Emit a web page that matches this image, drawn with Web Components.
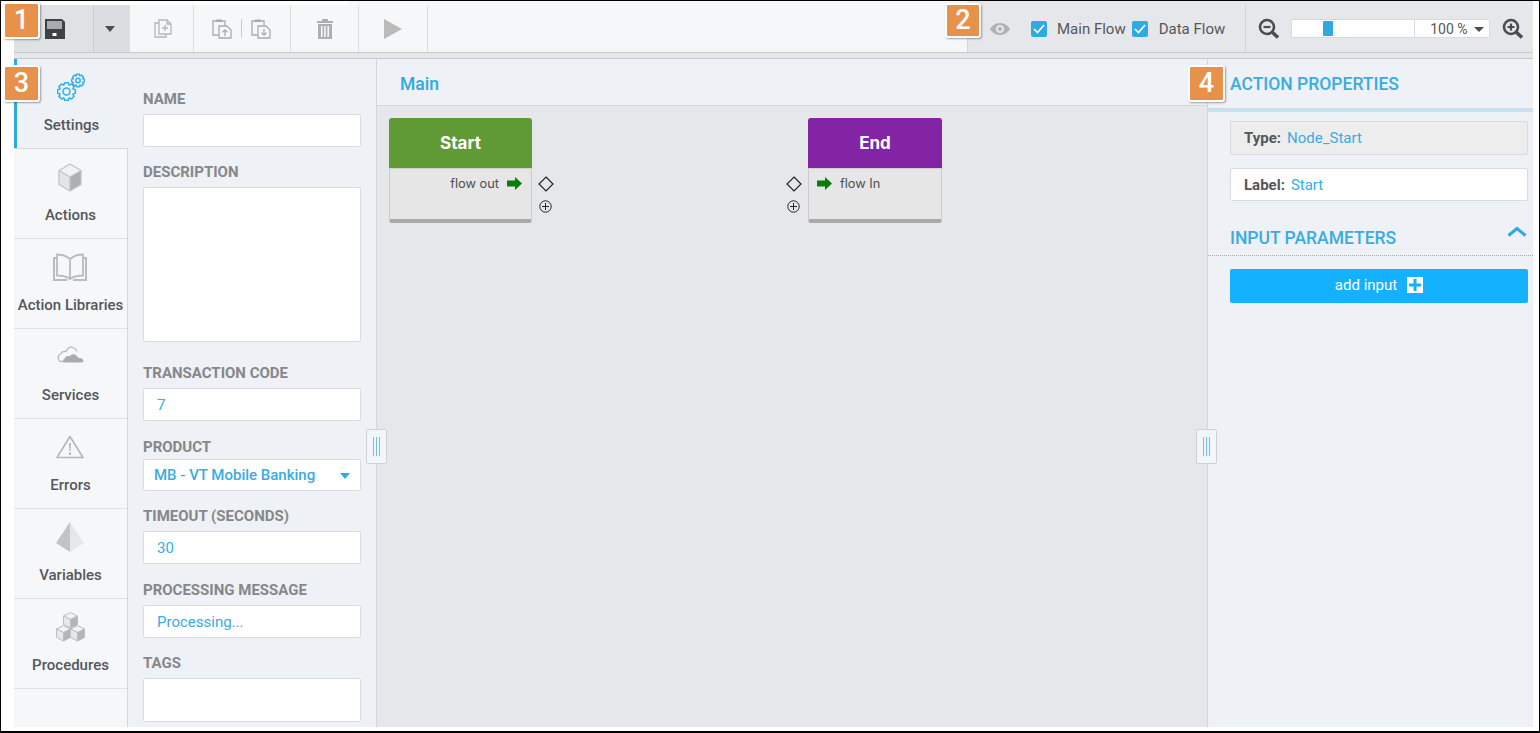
<!DOCTYPE html>
<html lang="en">
<head>
<meta charset="UTF-8">
<title>Flow Designer</title>
<style>
  html, body { margin: 0; padding: 0; background: #fff; }
  body { font-family: Roboto, "Liberation Sans", sans-serif; }
</style>
</head>
<body>

<flow-designer>
  <tool-bar slot="top"></tool-bar>
  <side-tabs slot="tabs">
    <side-tab label="Settings" active icon="gears"></side-tab>
    <side-tab label="Actions" icon="cube"></side-tab>
    <side-tab label="Action Libraries" icon="book"></side-tab>
    <side-tab label="Services" icon="cloud"></side-tab>
    <side-tab label="Errors" icon="warn"></side-tab>
    <side-tab label="Variables" icon="pyramid"></side-tab>
    <side-tab label="Procedures" icon="cubes"></side-tab>
  </side-tabs>
  <settings-form slot="form">
    <form-field label="NAME" h="33" style="margin-top:32px"></form-field>
    <form-field label="DESCRIPTION" h="155" style="margin-top:17px"></form-field>
    <form-field label="TRANSACTION CODE" value="7" h="33" style="margin-top:23px"></form-field>
    <form-field label="PRODUCT" value="MB - VT Mobile Banking" select h="32" gap="4" style="margin-top:18px"></form-field>
    <form-field label="TIMEOUT (SECONDS)" value="30" h="33" style="margin-top:17px"></form-field>
    <form-field label="PROCESSING MESSAGE" value="Processing..." h="33" style="margin-top:18px"></form-field>
    <form-field label="TAGS" h="44" style="margin-top:17px"></form-field>
  </settings-form>
  <flow-canvas slot="canvas">
    <flow-node kind="start" style="left:12px;top:12px">Start</flow-node>
    <flow-node kind="end" style="left:431px;top:12px">End</flow-node>
  </flow-canvas>
  <props-panel slot="props"></props-panel>
</flow-designer>

<script>
// all the icons in one place, used by toolbar and tabs
function gear(cx, cy, r, teeth) {
  let d = '';
  const step = Math.PI * 2 / teeth;
  for (let i = 0; i < teeth; i++) {
    const a = i * step;
    const pts = [[-.5, r * .78], [-.3, r], [.3, r], [.5, r * .78]];
    pts.forEach((p, j) => {
      const t = a + p[0] * step * .9;
      d += (i === 0 && j === 0 ? 'M' : 'L') + (cx + Math.cos(t) * p[1]).toFixed(2) + ' ' + (cy + Math.sin(t) * p[1]).toFixed(2) + ' ';
    });
  }
  return d + 'Z';
}

const CUBE = `<path fill="#f1f2f3" d="M7.500 .500 14.500 4l-7 3.500L.500 4z"/><path fill="#e6e7e8" d="M.500 4l7 3.500V16l-7-3.500z"/><path fill="#b3b5b7" d="M14.500 4l-7 3.500V16l7-3.500z"/>`;

const ICONS = {
  floppy: `<svg width="20" height="20" viewBox="0 0 20 20"><path fill="#3f4245" d="M0 0h17l3 3v17H0z"/><path fill="#a9acae" d="M2 2h15v8H2z"/><path fill="#fff" d="M7.500 14h4v3h-4z"/></svg>`,
  newdoc: `<svg width="18" height="19" viewBox="0 0 18 19" fill="none" stroke="#b4b6b8" stroke-width="1.300"><path d="M5 1h8l4 4v10H5z"/><path d="M13 1v4h4"/><path d="M5 4H1v14h11v-3"/><path d="M11 6v6M8 9h6"/></svg>`,
  pasteUp: `<svg width="20" height="21" viewBox="0 0 20 21" fill="none" stroke="#a9abad" stroke-width="1.300"><path d="M7 17H1V3h12v5"/><path fill="#a9abad" stroke="none" d="M4 1.500h6V4H4z"/><path d="M7 8h8l4 4v8H7z"/><path d="M13 18v-6M10.500 14.200 13 11.800l2.500 2.400"/></svg>`,
  pasteDown: `<svg width="20" height="21" viewBox="0 0 20 21" fill="none" stroke="#a9abad" stroke-width="1.300"><path d="M7 17H1V3h12v5"/><path fill="#a9abad" stroke="none" d="M4 1.500h6V4H4z"/><path d="M7 8h8l4 4v8H7z"/><path d="M13 11v6M10.500 14.800 13 17.200l2.500-2.400"/></svg>`,
  trash: `<svg width="16" height="20" viewBox="0 0 16 20"><path fill="#adafb1" d="M5 0h6v2h5v2H0V2h5zM1 5h14v15H1zM4 7v11h1.600V7zM7.200 7v11h1.600V7zM10.400 7v11H12V7z" fill-rule="evenodd"/></svg>`,
  play: `<svg width="18" height="20" viewBox="0 0 18 20"><path fill="#bababa" d="M0 0l18 10L0 20z"/></svg>`,
  eye: `<svg width="20" height="12" viewBox="0 0 20 12"><path fill="#b0b2b4" fill-rule="evenodd" d="M10 0c5 0 8.600 3.500 10 6-1.400 2.500-5 6-10 6S1.400 8.500 0 6c1.400-2.500 5-6 10-6zm0 2a4 4 0 1 0 0 8 4 4 0 0 0 0-8zm0 2a2 2 0 1 1 0 4 2 2 0 0 1 0-4z"/></svg>`,
  zoomOut: `<svg width="22" height="21" viewBox="0 0 22 21" fill="none" stroke="#4b4e50"><circle cx="9" cy="9" r="7" stroke-width="2.600"/><path d="M5.500 9h7" stroke-width="2.200"/><path d="M14 14l6 5.500" stroke-width="3.600"/></svg>`,
  zoomIn: `<svg width="22" height="21" viewBox="0 0 22 21" fill="none" stroke="#4b4e50"><circle cx="9" cy="9" r="7" stroke-width="2.600"/><path d="M5.500 9h7M9 5.500v7" stroke-width="2.200"/><path d="M14 14l6 5.500" stroke-width="3.600"/></svg>`,
  gears: `<svg width="28" height="29" viewBox="0 0 28 29" fill="none" stroke="#35afe4" stroke-width="1.500" stroke-linejoin="round"><path d="${gear(9.500, 18.500, 9, 8)}"/><circle cx="9.500" cy="18.500" r="3.500"/><path d="${gear(21, 7.500, 6.500, 8)}"/><circle cx="21" cy="7.500" r="2.200"/></svg>`,
  cube: `<svg width="24" height="29" viewBox="0 0 24 29"><path fill="#acaeb0" d="M12 14 23 7.500v14L12 28z"/><path fill="#e3e4e6" d="M12 14 1 7.500v14L12 28z"/><path fill="#f1f2f3" d="M12 1 23 7.500 12 14 1 7.500z"/><path fill="none" stroke="#c2c4c6" stroke-width="1.300" stroke-linejoin="round" d="M12 1 23 7.500v14L12 28 1 21.500v-14zM1 7.500 12 14l11-6.500M12 14v14"/></svg>`,
  book: `<svg width="34" height="28" viewBox="0 0 34 28"><path fill="#f6f7f9" stroke="#b9bbbd" stroke-width="1.800" d="M17 6C13 2.500 8 1.500 4 1.500v21c4.500 0 9.500 1 13 3.500 3.500-2.500 8.500-3.500 13-3.500v-21C26 1.500 21 2.500 17 6zM17 6v20"/><path fill="none" stroke="#b9bbbd" stroke-width="2" d="M3.500 5H1v22h13M30.500 5H33v22H20"/></svg>`,
  cloud: `<svg width="28" height="22" viewBox="0 0 28 22"><path fill="none" stroke="#b5b7b9" stroke-width="1.300" d="M8 15.500H5A4 4 0 0 1 4.500 8a5 5 0 0 1 5.500-2.500C11.500 2 14.500.700 17 1.500c2.500.800 3.500 2.500 4 4"/><path fill="#a9abad" d="M9 16.500c-2 0-2.500-3-.500-3.500.500-2.500 3-3.500 5-2.500 1.500-2.500 5-3 7-1 1.500 1.500 1.500 2 1.700 2.300 2.800-.300 5.300 1.700 5.300 3 0 1-1 1.700-2 1.700z"/></svg>`,
  warn: `<svg width="28" height="24" viewBox="0 0 28 24"><path fill="none" stroke="#b5b7b9" stroke-width="1.600" stroke-linejoin="round" d="M14 1.500 27 22.500H1z"/><path fill="#b5b7b9" d="M13 8h2l-.400 8h-1.200zM13 17.500h2V20h-2z"/></svg>`,
  pyramid: `<svg width="28" height="30" viewBox="0 0 28 30"><path fill="#c2c3c5" d="M14 0 0 21l14 9z"/><path fill="#e6e7e9" d="M14 0 28 21l-14 9z"/></svg>`,
  cubes: `<svg width="29" height="30" viewBox="0 0 29 30" stroke="#bcbec0" stroke-width="1" stroke-linejoin="round"><g transform="translate(7 0)">${CUBE}</g><g transform="translate(0 13)">${CUBE}</g><g transform="translate(14 13)">${CUBE}</g></svg>`,
  arrow: `<svg width="15" height="13" viewBox="0 0 15 13"><path fill="#0a7d0a" d="M0 3.500h8V0l7 6.500-7 6.500V9.500H0z"/></svg>`,
  diamond: `<svg width="16" height="16" viewBox="0 0 16 16"><path fill="none" stroke="#222" stroke-width="1.200" d="M8 1l7 7-7 7-7-7z"/></svg>`,
  plus: `<svg width="13" height="13" viewBox="0 0 13 13" fill="none" stroke="#222"><circle cx="6.500" cy="6.500" r="5.700"/><path d="M6.500 3v7M3 6.500h7"/></svg>`
};

class FlowDesigner extends HTMLElement {
  constructor() {
    super();
    this.attachShadow({ mode: 'open' });
    this.shadowRoot.innerHTML = `
      <style>
        :host { display: block; position: relative; width: 1540px; height: 733px; box-sizing: border-box;
          border: 1px solid #000; border-bottom-width: 2px; padding: 0 6px 4px 13px; background: #fff; overflow: hidden;
          font-family: Roboto, "Liberation Sans", sans-serif; }
        .frame { display: flex; flex-direction: column; height: 100%; }
        .gap { height: 5px; flex: none; background: #e5e7eb; border-bottom: 1px solid #c6c8cb; }
        .main { flex: 1; min-height: 0; display: grid; grid-template-columns: 114px 249px 1fr 325px; background: #eef1f6; }
        .main ::slotted(*) { min-height: 0; }
        .grip { position: absolute; width: 21px; height: 35px; top: 428px; box-sizing: border-box;
          background: #f2f5f9; border: 1px solid #cfd2d5; border-radius: 2px; display: flex; justify-content: center; gap: 2px; padding: 7px 0; }
        .grip i { width: 1px; background: #6cc3ec; }
        .g1 { left: 365px; } .g2 { left: 1195px; }
      </style>
      <div class="frame">
        <slot name="top"></slot>
        <div class="gap"></div>
        <div class="main">
          <slot name="tabs"></slot>
          <slot name="form"></slot>
          <slot name="canvas"></slot>
          <slot name="props"></slot>
        </div>
      </div>
      <div class="grip g1"><i></i><i></i><i></i></div>
      <div class="grip g2"><i></i><i></i><i></i></div>
      <num-badge style="left:2px;top:1px">1</num-badge>
      <num-badge style="left:944px;top:2px;width:36px;height:35px;line-height:31px">2</num-badge>
      <num-badge style="left:2px;top:64px">3</num-badge>
      <num-badge style="left:1187px;top:64px">4</num-badge>
    `;
  }
}

class NumBadge extends HTMLElement {
  constructor() {
    super();
    this.attachShadow({ mode: 'open' });
    this.shadowRoot.innerHTML = `
      <style>
        :host { position: absolute; width: 37px; height: 37px; box-sizing: border-box; background: #e8914a;
          border: 2px solid #fff; border-radius: 3px; box-shadow: 1px 1px 2px rgba(0,0,0,.35);
          color: #fff; font: 500 27px/33px Roboto, sans-serif; text-align: center; }
      </style><slot></slot>`;
  }
}

class ToolBar extends HTMLElement {
  constructor() {
    super();
    this.attachShadow({ mode: 'open' });
    this.shadowRoot.innerHTML = `
      <style>
        :host { display: block; flex: none; height: 52px; box-sizing: border-box; border-bottom: 1px solid #c6c8cb;
          background: linear-gradient(to right, #fff 334px, #f6f7f9 334px, #f6f7f9 953px, #e5e7eb 953px) top / 100% 5px no-repeat; 
          padding-top: 4px; color: #55585b; font-size: 15px; }
        .bar { height: 47px; display: flex; align-items: stretch; background: #f6f7f9; }
        .seg { display: flex; align-items: center; justify-content: center; flex: none; box-sizing: border-box; border-right: 1px solid #dcdee1; }
        .save { width: 80px; background: #dfe2e5; padding-left: 2px; border-right-color: #c9ccd0; }
        .caret { width: 36px; background: #dbdee1; border-right: 0; padding-right: 4px; }
        .caret i { border: 5px solid transparent; border-top: 6px solid #4a4c4f; border-bottom: 0; }
        .s1 { width: 64px; padding-left: 3px; } .s2 { width: 97px; gap: 9px; padding-right: 2px; } .s3 { width: 68px; } .s4 { width: 69px; }
        .s2 b { width: 1px; height: 19px; background: #c8cacc; }
        .fill { flex: 1; }
        .right { width: 566px; flex: none; background: #e5e7eb; display: flex; align-items: center; border-left: 1px solid #d3d5d8; box-sizing: border-box; }
        .eye { margin-left: 22px; display: flex; margin-right: 21px; }
        label { display: flex; align-items: center; white-space: nowrap; }
        .check { width: 16px; height: 16px; background: #2ea9e1; border-radius: 2px; display: flex; align-items: center; justify-content: center; margin-right: 10px; }
        .flow2 { margin-left: 6px; }
        .flow2 .check { margin-right: 11px; }
        .sep { width: 1px; align-self: stretch; background: #d3d5d8; margin: 0 12px 0 20px; }
        .track { width: 124px; height: 19px; margin-left: 11px; background: #fff; border: 1px solid #d8dadd; box-sizing: border-box; position: relative; border-radius: 2px 0 0 2px; }
        .track i { position: absolute; left: 31px; top: 1px; width: 10px; height: 15px; background: #2fa9e0; border-radius: 1px; }
        .pct { width: 75px; height: 19px; box-sizing: border-box; background: #fff; border: 1px solid #d8dadd; border-left: 0; border-radius: 0 2px 2px 0;
          display: flex; align-items: center; font-size: 14px; padding-left: 15px; gap: 6px; }
        .pct i { border: 5px solid transparent; border-top: 5px solid #4a4c4f; border-bottom: 0; margin-top: 2px; }
        .zi { margin-left: 12px; display: flex; }
        .zo { display: flex; }
      </style>
      <div class="bar">
        <div class="seg save">${ICONS.floppy}</div>
        <div class="seg caret"><i></i></div>
        <div class="seg s1">${ICONS.newdoc}</div>
        <div class="seg s2">${ICONS.pasteUp}<b></b>${ICONS.pasteDown}</div>
        <div class="seg s3">${ICONS.trash}</div>
        <div class="seg s4">${ICONS.play}</div>
        <div class="fill"></div>
        <div class="right">
          <span class="eye">${ICONS.eye}</span>
          <label><span class="check"><svg width="12" height="10" viewBox="0 0 12 10"><path fill="none" stroke="#fff" stroke-width="1.700" d="M1 5l3.500 3.500L11 1"/></svg></span>Main Flow</label>
          <label class="flow2"><span class="check"><svg width="12" height="10" viewBox="0 0 12 10"><path fill="none" stroke="#fff" stroke-width="1.700" d="M1 5l3.500 3.500L11 1"/></svg></span>Data Flow</label>
          <span class="sep"></span>
          <span class="zo">${ICONS.zoomOut}</span>
          <div class="track"><i></i></div>
          <div class="pct">100 %<i></i></div>
          <span class="zi">${ICONS.zoomIn}</span>
        </div>
      </div>`;
  }
}

class SideTabs extends HTMLElement {
  constructor() {
    super();
    this.attachShadow({ mode: 'open' });
    this.shadowRoot.innerHTML = `
      <style>:host { display: flex; flex-direction: column; background: #f6f7f9; border-right: 1px solid #d5d7da; box-sizing: border-box; }</style>
      <slot></slot>`;
  }
}

class SideTab extends HTMLElement {
  connectedCallback() {
    if (this.shadowRoot) return;
    this.attachShadow({ mode: 'open' });
    const icon = this.getAttribute('icon');
    this.shadowRoot.innerHTML = `
      <style>
        :host { display: block; height: 90px; box-sizing: border-box; position: relative; border-bottom: 1px solid #dfe1e4; color: #54575b;
          font-size: 15px; font-weight: 500; text-align: center; white-space: nowrap; }
        :host([active]) { background: #eef1f6; margin-right: -1px; box-shadow: inset 3px 0 0 #2fa9e0; border-bottom: 1px solid #d5d7da; }
        .ic { position: absolute; left: 0; right: 1px; top: 13px; height: 30px; display: flex; align-items: center; justify-content: center; }
        .tx { position: absolute; left: 0; right: 0; top: 57px; line-height: 18px; }
        :host([active]) .ic { left: 1px; }
        :host([active]) .tx { left: 1px; }
      </style>
      <div class="ic">${ICONS[icon]}</div>
      <div class="tx">${this.getAttribute('label')}</div>`;
  }
}

class SettingsForm extends HTMLElement {
  constructor() {
    super();
    this.attachShadow({ mode: 'open' });
    this.shadowRoot.innerHTML = `
      <style>:host { display: block; box-sizing: border-box; padding: 0 15px 0 15px; border-right: 1px solid #d5d7da; background: #eef1f6; overflow: hidden; }</style>
      <slot></slot>`;
  }
}

class FormField extends HTMLElement {
  connectedCallback() {
    if (this.shadowRoot) return;
    this.attachShadow({ mode: 'open' });
    const value = this.getAttribute('value') || '';
    const isSelect = this.hasAttribute('select');
    this.shadowRoot.innerHTML = `
      <style>
        :host { display: block; }
        .lb { height: 16px; line-height: 16px; margin-bottom: ${this.getAttribute('gap') || 7}px; color: #85878a; font-size: 15px; font-weight: 700; }
        .in { height: ${this.getAttribute('h')}px; box-sizing: border-box; background: #fff; border: 1px solid #d8dbdf; border-radius: 2px;
          display: flex; align-items: center; padding: 0 13px 0 13px; color: #39ace2; font-size: 15px; }
        .sel { padding: 0 10px 0 10px; font-weight: 500; justify-content: space-between; }
        .sel i { border: 5px solid transparent; border-top: 6px solid #2fa9e0; border-bottom: 0; margin-top: 2px; }
      </style>
      <div class="lb">${this.getAttribute('label')}</div>
      <div class="in ${isSelect ? 'sel' : ''}"><span>${value}</span>${isSelect ? '<i></i>' : ''}</div>`;
  }
}

class FlowCanvas extends HTMLElement {
  constructor() {
    super();
    this.attachShadow({ mode: 'open' });
    this.shadowRoot.innerHTML = `
      <style>
        :host { display: flex; flex-direction: column; background: #e5e7eb; border-right: 1px solid #d5d7da; min-width: 0; }
        .head { height: 47px; flex: none; box-sizing: border-box; background: #eef1f6; border-bottom: 1px solid #d5d7da; padding-left: 23px;
          color: #2fa9e0; font-size: 17.500px; font-weight: 500; line-height: 50px; }
        .area { flex: 1; position: relative; }
      </style>
      <div class="head">Main</div>
      <div class="area"><slot></slot></div>`;
  }
}

class FlowNode extends HTMLElement {
  connectedCallback() {
    if (this.shadowRoot) return;
    this.attachShadow({ mode: 'open' });
    const start = this.getAttribute('kind') === 'start';
    this.shadowRoot.innerHTML = `
      <style>
        :host { position: absolute; width: ${start ? 143 : 134}px; height: 105px; box-sizing: border-box; background: #e6e6e6;
          border: 1px solid #c9cbce; border-bottom: 4px solid #a9a9a9; border-radius: 3px; font-family: Inter, "Liberation Sans", sans-serif; }
        .top { height: 51px; box-sizing: border-box; margin: -1px -1px 0; border-radius: 3px 3px 0 0; background: ${start ? '#5f9a35' : '#8224a3'};
          color: #fff; font-weight: 700; font-size: 17px; line-height: 50px; text-align: center; border-bottom: 1px solid #d0d0d0; }
        .row { position: absolute; top: 57px; display: flex; align-items: center; gap: 8px; color: #4f4f4f; font-size: 12.800px; line-height: 15px; white-space: nowrap; }
        .out { right: 9px; } .in { left: 8px; }
        .port { position: absolute; display: flex; }
        .p1 { top: 57px; } .p2 { top: 81px; }
        .r.p1 { left: 148px; } .r.p2 { left: 149px; }
        .l.p1 { left: -23px; } .l.p2 { left: -22px; }
      </style>
      <div class="top"><slot></slot></div>
      ${start
        ? `<div class="row out">flow out ${ICONS.arrow}</div>
           <span class="port r p1">${ICONS.diamond}</span><span class="port r p2">${ICONS.plus}</span>`
        : `<div class="row in">${ICONS.arrow} flow In</div>
           <span class="port l p1">${ICONS.diamond}</span><span class="port l p2">${ICONS.plus}</span>`}`;
  }
}

class PropsPanel extends HTMLElement {
  constructor() {
    super();
    this.attachShadow({ mode: 'open' });
    this.shadowRoot.innerHTML = `
      <style>
        :host { display: block; background: #eef1f6; color: #39ace2; font-size: 15px; min-width: 0; }
        .head { height: 50px; box-sizing: border-box; border-bottom: 1px solid #d5d7da; padding-left: 22px; font-size: 17.500px; font-weight: 500; line-height: 50px; }
        .strip { height: 3px; background: #c5e2f3; }
        .body { padding: 9px 5px 0 22px; }
        .box { height: 34px; box-sizing: border-box; border: 1px solid #d8dbdf; border-radius: 2px; display: flex; align-items: center; padding-left: 13px; gap: 6px; margin-bottom: 13px; background: #fff; }
        .box b { color: #54575b; font-weight: 700; }
        .type { background: #ededed; }
        .lab { height: 33px; }
        .sect { display: flex; justify-content: space-between; align-items: flex-start; height: 41px; margin: 0; }
        .title { font-size: 17.500px; font-weight: 500; line-height: 20px; margin-top: 14px; }
        .sect svg { margin: 12px 1px 0 0; }
        .dots { border-top: 1px dotted #aaa; margin: 0 -5px 13px -22px; }
        button { display: flex; width: 100%; height: 34px; align-items: center; justify-content: center; gap: 10px; border: 0; border-radius: 2px; background: #14b1ff; color: #fff;
          font: 400 15px Roboto, sans-serif; padding: 0 0 2px; }
        .pl { width: 16px; height: 16px; background: #fff; position: relative; margin-top: 0; }
        .pl svg { position: absolute; left: 2px; top: 2px; }
      </style>
      <div class="head">ACTION PROPERTIES</div>
      <div class="strip"></div>
      <div class="body">
        <div class="box type"><b>Type:</b> Node_Start</div>
        <div class="box lab"><b>Label:</b> Start</div>
        <div class="sect"><span class="title">INPUT PARAMETERS</span>
          <svg width="20" height="11" viewBox="0 0 20 11"><path fill="none" stroke="#2fa9e0" stroke-width="3" d="M1.500 9.500 10 2.500l8.500 7"/></svg></div>
        <div class="dots"></div>
        <button>add input <span class="pl"><svg width="12" height="12" viewBox="0 0 12 12"><path fill="#14b1ff" d="M4.500 0h3v4.500H12v3H7.500V12h-3V7.500H0v-3h4.500z"/></svg></span></button>
      </div>`;
  }
}

customElements.define('flow-designer', FlowDesigner);
customElements.define('num-badge', NumBadge);
customElements.define('tool-bar', ToolBar);
customElements.define('side-tabs', SideTabs);
customElements.define('side-tab', SideTab);
customElements.define('settings-form', SettingsForm);
customElements.define('form-field', FormField);
customElements.define('flow-canvas', FlowCanvas);
customElements.define('flow-node', FlowNode);
customElements.define('props-panel', PropsPanel);
</script>
</body>
</html>
